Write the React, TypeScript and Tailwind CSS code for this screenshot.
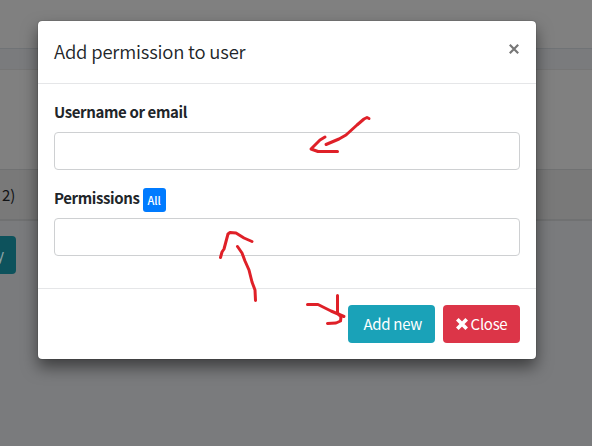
import React from "react";

function Backdrop() {
  return (
    <div className="flex h-full flex-col text-[#111315]">
      <div className="h-[49px] shrink-0 border-b border-[#707376] bg-[#808080]" />
      <div className="h-5 shrink-0 bg-[#7a7b7d]" />
      <div className="h-[100px] shrink-0 border-t border-[#767676] bg-[#808080]" />
      <div className="flex h-[52px] shrink-0 items-center border-t border-b-2 border-[#707172] bg-[#797979] pl-[2px] text-[15px]">
        <span>2)</span>
      </div>
      <div className="flex grow items-start bg-[#7a7b7d] pt-[15px]">
        <div className="flex h-[38px] w-4 items-center justify-end rounded-r bg-[#0d525c] pr-3 text-[15px] text-[#8ba3a7]">
          <span>y</span>
        </div>
      </div>
    </div>
  );
}

function Field({ label, badge }: { label: string; badge?: string }) {
  return (
    <div>
      <div className="flex h-8 items-start gap-[3px] text-[15px] font-bold tracking-[-0.38px]">
        <span>{label}</span>
        {badge && (
          <span className="mt-0.5 flex h-6 w-[23px] items-center justify-center rounded-[3px] bg-[#007bff] pb-px text-[11px] font-medium tracking-normal text-white">
            {badge}
          </span>
        )}
      </div>
      <input className="block h-[38px] w-full rounded border border-[#ced0d2] bg-white px-3 outline-none" />
    </div>
  );
}

function Marks() {
  return (
    <svg
      className="pointer-events-none absolute inset-0"
      width="592"
      height="446"
      viewBox="0 0 592 446"
      fill="none"
      stroke="#df2028"
      strokeWidth="3"
      strokeLinecap="round"
      strokeLinejoin="round"
    >
      <path d="M369 118.5L367 117.5L364 119L357 125L346 135L339 139L326 144.5" />
      <path d="M325 137L320 140L311 149L318 151.5H337.5" />
      <path d="M220.5 257.5L222 252L224 249L228 234L230 232.5L236 233L244 238L252 241.5" />
      <path d="M237.5 246.5L242 253L245 261L249 270L252 282L255 290L255.5 300.5" />
      <path d="M307.5 304.5H318L325 308L331 311L344 316.5" />
      <path d="M337.5 295.5V313L341 317L340.5 321L336 323L327.5 323.5" />
    </svg>
  );
}

export default function App() {
  return (
    <div className="relative h-[446px] w-[592px] overflow-hidden font-['Noto_Sans_CJK_SC','Noto_Sans',sans-serif] leading-6">
      <Backdrop />
      <div className="absolute top-[21px] left-[38px] flex h-[338px] w-[498px] flex-col rounded bg-white text-[#212529] shadow-[0_8px_16px_rgba(0,0,0,0.5),0_0_1px_rgba(0,0,0,0.8)]">
        <div className="flex h-[63px] items-center justify-between border-b border-[#e5e6e8] px-4 pb-0.5">
          <h1 className="text-[18.5px] font-[350] tracking-[-0.2px]">Add permission to user</h1>
          <button className="flex h-8 w-3 items-center justify-center pb-[5px]" aria-label="Dismiss">
            <svg width="10" height="10" viewBox="0 0 10 10" stroke="#777" strokeWidth="2.2">
              <path d="M.8.8l8.4 8.4M9.2.8L.8 9.2" />
            </svg>
          </button>
        </div>
        <div className="flex grow flex-col gap-4 px-4 pt-4">
          <Field label="Username or email" />
          <Field label="Permissions" badge="All" />
        </div>
        <div className="flex h-[71px] items-center justify-end gap-2 border-t border-[#e5e6e8] px-4 text-[15px] tracking-[-0.3px] text-white">
          <button className="flex h-[38px] w-[87px] items-center justify-end rounded bg-[#1aa2b8] pr-[13px]">
            Add new
          </button>
          <button className="flex h-[38px] w-[77px] items-center justify-center gap-[3px] rounded bg-[#dc3548]">
            <svg width="12" height="12" viewBox="0 0 12 12" stroke="currentColor" strokeWidth="3.7">
              <path d="M1.3 1.3l9.4 9.4M10.7 1.3l-9.4 9.4" />
            </svg>
            Close
          </button>
        </div>
      </div>
      <Marks />
    </div>
  );
}
